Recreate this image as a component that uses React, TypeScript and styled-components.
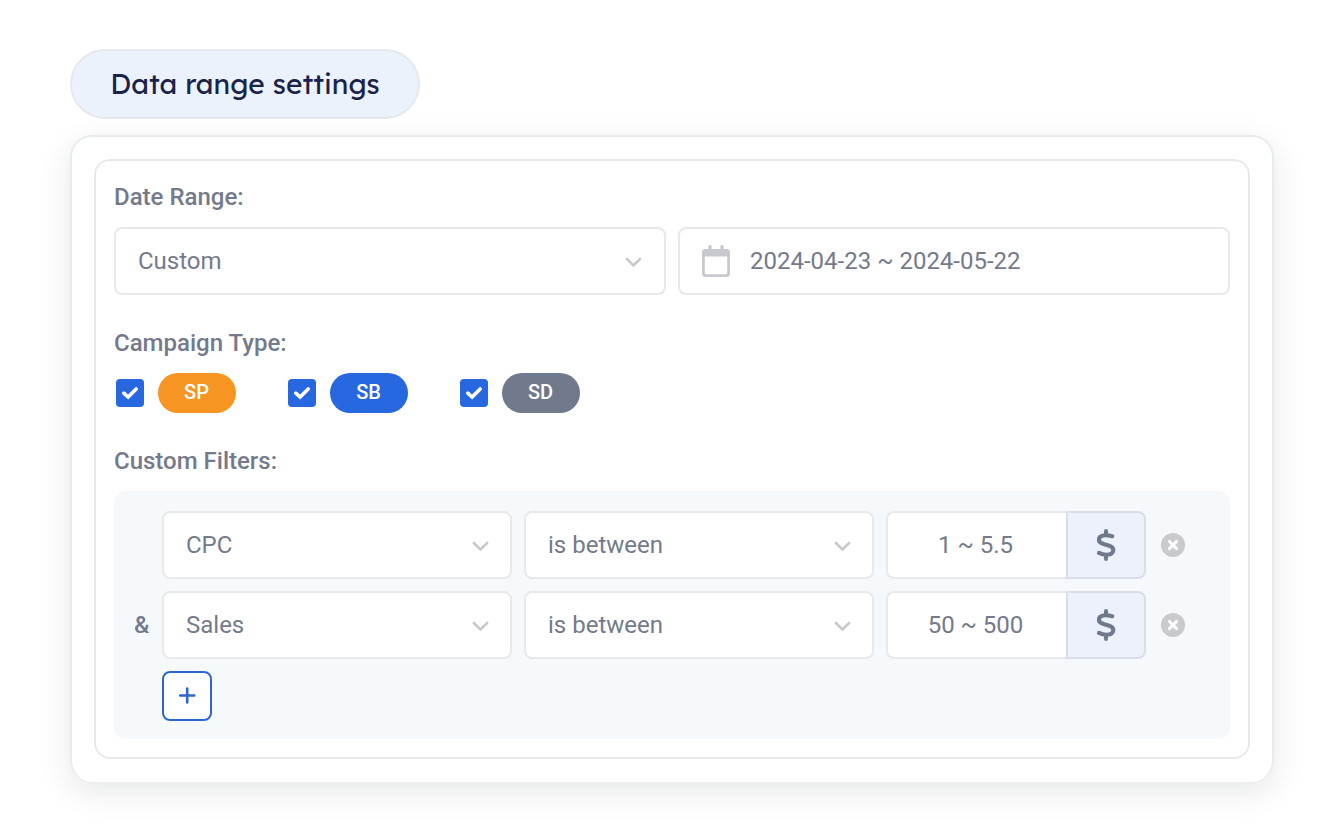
import React from "react";
import styled, { createGlobalStyle } from "styled-components";

type CampaignType = { name: string; color: string };
type FilterType = { field: string; rule: string; value: string };

const campaigns: CampaignType[] = [
	{ name: "SP", color: "#f69521" },
	{ name: "SB", color: "#2767df" },
	{ name: "SD", color: "#71798c" },
];

const filters: FilterType[] = [
	{ field: "CPC", rule: "is between", value: "1 ~ 5.5" },
	{ field: "Sales", rule: "is between", value: "50 ~ 500" },
];

export default function App() {
	return (
		<Page>
			<GlobalStyle />
			<Title>
				<span>Data range settings</span>
			</Title>
			<Card>
				<Settings>
					<Label>Date Range:</Label>
					<DateRow>
						<Select text='Custom' />
						<Field>
							<CalendarIcon />
							2024-04-23 ~ 2024-05-22
						</Field>
					</DateRow>

					<Label>Campaign Type:</Label>
					<Campaigns>
						{campaigns.map((item) => (
							<Campaign key={item.name}>
								<Checkbox>
									<CheckIcon />
								</Checkbox>
								<Tag $color={item.color}>{item.name}</Tag>
							</Campaign>
						))}
					</Campaigns>

					<Label>Custom Filters:</Label>
					<Filters>
						{filters.map((item, index) => (
							<FilterRow key={item.field}>
								<Joiner>{index > 0 && "&"}</Joiner>
								<Select text={item.field} compact />
								<Select text={item.rule} compact />
								<ValueGroup>
									<Value>{item.value}</Value>
									<Unit>
										<DollarIcon />
									</Unit>
								</ValueGroup>
								<RemoveButton aria-label='Remove'>
									<RemoveIcon />
								</RemoveButton>
							</FilterRow>
						))}
						<AddButton aria-label='Add'>
							<PlusIcon />
						</AddButton>
					</Filters>
				</Settings>
			</Card>
		</Page>
	);
}

const Select = ({ text, compact }: { text: string; compact?: boolean }) => (
	<Field $compact={compact}>
		<FieldText>{text}</FieldText>
		<svg width='18' height='14' viewBox='0 0 18 14' fill='none'>
			<path d='M2.9 5l6.600 6.400L16.100 5' stroke='#c8c9ce' strokeWidth='2.6' strokeLinecap='round' />
		</svg>
	</Field>
);

const CalendarIcon = () => (
	<svg width='28' height='32' viewBox='0 0 28 32' fill='#c8c9ce'>
		<rect x='6.4' y='0' width='3.2' height='7' rx='1.5' />
		<rect x='18.4' y='0' width='3.2' height='7' rx='1.5' />
		<path
			fillRule='evenodd'
			d='M3.5 4h21A3.5 3.5 0 0 1 28 7.5v21a3.5 3.5 0 0 1-3.5 3.5h-21A3.5 3.5 0 0 1 0 28.500v-21A3.500 3.500 0 0 1 3.500 4zM2.800 11.500v16.200a1.500 1.500 0 0 0 1.500 1.500h19.400a1.500 1.500 0 0 0 1.500-1.500V11.500z'
		/>
	</svg>
);

const CheckIcon = () => (
	<svg width='28' height='28' viewBox='0 0 28 28' fill='none'>
		<path
			d='M7.8 14.2l4.300 3.800 8.100-8.100'
			stroke='#fff'
			strokeWidth='3.6'
			strokeLinecap='round'
		/>
	</svg>
);

const DollarIcon = () => (
	<svg width='20' height='32' viewBox='0 0 20 32' fill='none' stroke='#71798c' strokeLinecap='round'>
		<path d='M10 2v4M10 26.5V30' strokeWidth='4' />
		<path
			d='M16.3 7.200C13.700 6.500 11.800 6.200 9.600 6.200 5.300 6.200 2.900 8 2.900 10.800c0 6.200 14.400 3.700 14.400 10.200 0 3.100-2.700 4.800-6.700 4.800-3 0-5.500-.8-7.700-1.900'
			strokeWidth='4.1'
		/>
	</svg>
);

const RemoveIcon = () => (
	<svg width='24' height='24' viewBox='0 0 24 24' fill='none'>
		<circle cx='12' cy='12' r='12' fill='#c9cacd' />
		<path
			d='M8.5 8.500l7 7M15.500 8.500l-7 7'
			stroke='#fff'
			strokeWidth='3.1'
			strokeLinecap='round'
		/>
	</svg>
);

const PlusIcon = () => (
	<svg width='18' height='18' viewBox='0 0 18 18' fill='none'>
		<path d='M9.2 1.500v14M2.200 8.500h14' stroke='#2d66d3' strokeWidth='2.6' strokeLinecap='round' />
	</svg>
);

const GlobalStyle = createGlobalStyle`
	* {
		box-sizing: border-box;
	}
	body {
		margin: 0;
		background: #fff;
	}
	svg {
		display: block;
		flex: none;
	}
	button {
		padding: 0;
		border: 0;
		background: none;
	}
`;

const Page = styled.div`
	display: flex;
	flex-direction: column;
	align-items: flex-start;
	gap: 16px;
	height: 832px;
	padding: 49px 70px 0;
	overflow: hidden;
	color: #747a8c;
	font-family: Roboto, "Liberation Sans", sans-serif;
	font-size: 24px;
`;

const Title = styled.div`
	display: flex;
	align-items: center;
	justify-content: center;
	width: 350px;
	height: 70px;
	padding-bottom: 2px;
	border: 2px solid #e6e8ec;
	border-radius: 35px;
	background: #ecf2fc;
	color: #1a2349;
	font-family: Lexend, Inter, sans-serif;
	font-size: 28px;
	white-space: nowrap;
`;

const Card = styled.div`
	width: 1204px;
	height: 647px;
	padding: 22px;
	border: 2px solid #e7ecf1;
	border-bottom-width: 0;
	border-radius: 22px;
	background: #fff;
	box-shadow: 0 10px 32px rgba(30, 36, 50, 0.11);
`;

const Settings = styled.div`
	height: 600px;
	padding: 18px;
	border: 2px solid #e8e9eb;
	border-radius: 16px;
`;

const Label = styled.div`
	height: 36px;
	margin-bottom: 12px;
	font-weight: 500;
	line-height: 36px;
`;

const DateRow = styled.div`
	display: grid;
	grid-template-columns: 1fr 1fr;
	gap: 12px;
	margin-bottom: 30px;
`;

const Field = styled.div<{ $compact?: boolean }>`
	display: flex;
	align-items: center;
	gap: 20px;
	height: 68px;
	padding: 0 ${({ $compact }) => ($compact ? 21 : 22)}px 0 22px;
	border: 2px solid #e8e9eb;
	border-radius: 8px;
	background: #fff;
`;

const FieldText = styled.span`
	flex: 1;
`;

const Campaigns = styled.div`
	display: flex;
	gap: 52px;
	margin: 0 0 30px 2px;
`;

const Campaign = styled.div`
	display: flex;
	align-items: center;
	gap: 14px;
`;

const Checkbox = styled.div`
	width: 28px;
	height: 28px;
	border-radius: 4px;
	background: #2767df;
`;

const Tag = styled.div<{ $color: string }>`
	width: 78px;
	height: 40px;
	padding-right: 1px;
	border-radius: 20px;
	background: ${({ $color }) => $color};
	color: #fff;
	font-size: 20px;
	font-weight: 500;
	line-height: 39px;
	text-align: center;
`;

const Filters = styled.div`
	display: flex;
	flex-direction: column;
	gap: 12px;
	height: 248px;
	padding: 20px 0 18px;
	border-radius: 12px;
	background: #f5f9fc;
`;

const FilterRow = styled.div`
	display: grid;
	grid-template-columns: 36px 350px 350px 260px 24px;
	gap: 12px;
	align-items: center;
`;

const Joiner = styled.span`
	padding-left: 20px;
	font-weight: 500;
`;

const ValueGroup = styled.div`
	display: flex;
	height: 68px;
`;

const Value = styled.div`
	width: 180px;
	padding-right: 3px;
	border: 2px solid #e8e9eb;
	border-right: 0;
	border-radius: 8px 0 0 8px;
	background: #fff;
	line-height: 64px;
	text-align: center;
`;

const Unit = styled.div`
	display: flex;
	align-items: center;
	justify-content: center;
	width: 80px;
	border: 2px solid #d9dde9;
	border-radius: 0 8px 8px 0;
	background: #ecf1fc;
`;

const RemoveButton = styled.button`
	margin-left: 3px;
`;

const AddButton = styled.button`
	display: flex;
	align-items: center;
	justify-content: center;
	width: 50px;
	height: 50px;
	margin-left: 48px;
	border: 2px solid #2d66d3;
	border-radius: 8px;
	background: #fff;
`;
